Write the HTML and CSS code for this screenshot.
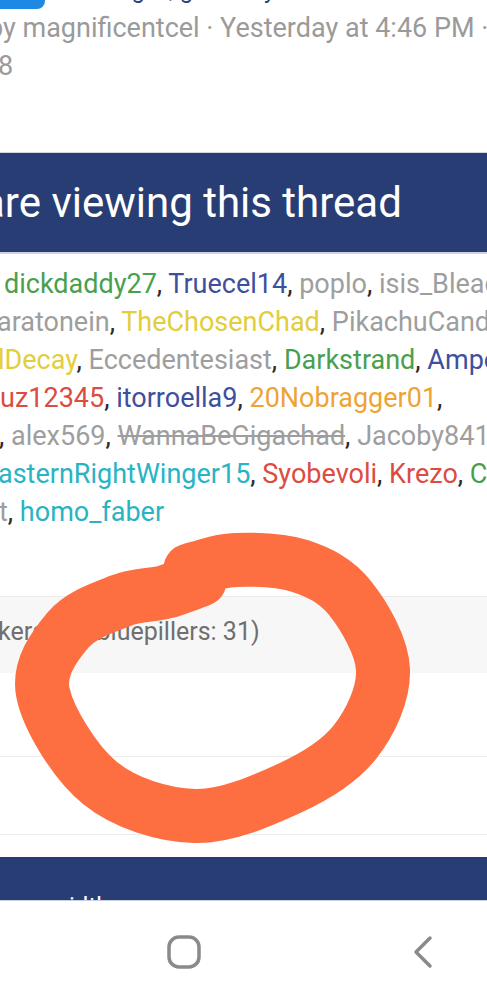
FILE: index.html
```html
<!DOCTYPE html>
<html lang="en">
<head>
    <meta charset="UTF-8">
    <meta name="viewport" content="width=device-width, initial-scale=1.0">
    <title>Who is viewing this thread</title>
    <link rel="stylesheet" href="styles.css">
</head>
<body>
    <div class="page">
        <!-- thread title, scrolled mostly out of view -->
        <div class="thread-top">
            <span class="prefix-tag"></span>
            <span class="thread-title">The thing is, girls only</span>
        </div>
        <div class="thread-meta">
            <div class="meta-line meta-first">by magnificentcel · Yesterday at 4:46 PM · Replies</div>
            <div class="meta-line meta-second">8</div>
        </div>

        <section class="block">
            <h2 class="block-header">are viewing this thread</h2>
            <div class="user-list">
                <div class="line line-1"><span class="green">dickdaddy27</span>, <span class="indigo">Truecel14</span>, <span class="gray">poplo</span>, <span class="gray">isis_Bleach</span>,</div>
                <div class="line line-2"><span class="gray">aratonein</span>, <span class="yellow">TheChosenChad</span>, <span class="gray">PikachuCandy</span>,</div>
                <div class="line line-3"><span class="yellow">lDecay</span>, <span class="gray">Eccedentesiast</span>, <span class="green">Darkstrand</span>, <span class="indigo">Ampere</span>,</div>
                <div class="line line-4"><span class="red">uz12345</span>, <span class="indigo">itorroella9</span>, <span class="orange">20Nobragger01</span>,</div>
                <div class="line line-5">, <span class="gray">alex569</span>, <span class="gray struck">WannaBeGigachad</span>, <span class="gray">Jacoby841</span>,</div>
                <div class="line line-6"><span class="teal">asternRightWinger15</span>, <span class="red">Syobevoli</span>, <span class="red">Krezo</span>, <span class="green">Copecel</span>,</div>
                <div class="line line-7"><span class="gray">t</span>, <span class="teal">homo_faber</span></div>
            </div>
            <div class="block-footer">kers: 14, bluepillers: 31)</div>
            <div class="block-row"></div>
            <div class="block-row short"></div>
        </section>

        <section class="block next-block">
            <h2 class="block-header small">width</h2>
        </section>
    </div>

    <!-- android navigation bar -->
    <nav class="system-nav">
        <svg class="nav-home" width="34" height="34" viewBox="0 0 34 34">
            <rect x="2" y="2" width="30" height="30" rx="10" fill="none" stroke="#8a8a8a" stroke-width="3.5"/>
        </svg>
        <svg class="nav-back" width="22" height="34" viewBox="0 0 22 34">
            <polyline points="18,3 4,17 18,31" fill="none" stroke="#8a8a8a" stroke-width="3.5" stroke-linecap="round" stroke-linejoin="round"/>
        </svg>
    </nav>

    <!-- hand drawn circle over the page -->
    <svg class="scribble" width="487" height="1000" viewBox="0 0 487 1000">
        <path d="M190 570 C205 566.7 216.7 560.7 235 560 C253.3 559.3 280.8 559.7 300 566 C319.2 572.3 336.2 580.7 350 598 C363.8 615.3 382.2 646 383 670 C383.8 694 370.5 722.3 355 742 C339.5 761.7 316.7 775.7 290 788 C263.3 800.3 226.7 816.8 195 816 C163.3 815.2 125.3 803.5 100 783 C74.7 762.5 48.3 718.5 43 693 C37.7 667.5 55.2 645.3 68 630 C80.8 614.7 103.8 607.3 120 601 C136.2 594.7 151.7 595.5 165 592 C178.3 588.5 188.3 584 200 580" fill="none" stroke="#fd6e40" stroke-width="54" stroke-linecap="round" stroke-linejoin="round"/>
    </svg>
</body>
</html>
```

FILE: styles.css
```css
* {
    box-sizing: border-box;
}
body {
    margin: 0;
    font-family: Roboto, "Noto Sans", Arial, sans-serif;
    background-color: #fff;
    color: #2b2b2b;
    position: relative;
    height: 1000px;
    overflow: hidden;
}
.page {
    overflow: hidden;
}
.thread-top {
    display: flex;
    align-items: flex-start;
    height: 9px;
    overflow: hidden;
}
.prefix-tag {
    flex: 0 0 45px;
    height: 9px;
    background: #1e88e5;
    border-radius: 0 0 8px 0;
}
.thread-title {
    margin-top: -22px;
    font-size: 24px;
    line-height: 24px;
    color: #2b3f7a;
    white-space: nowrap;
}
.thread-meta {
    font-size: 27px;
    line-height: 38px;
    color: #9a9a9a;
    white-space: nowrap;
}
.meta-first {
    margin-left: -12px;
}
.meta-second {
    margin-left: -2px;
}
.block {
    margin-top: 67px;
}
.block-header {
    margin: 0;
    height: 102px;
    line-height: 100px;
    background: #293d75;
    color: #fff;
    font-size: 42px;
    font-weight: 400;
    text-indent: -18px;
    white-space: nowrap;
    overflow: hidden;
    border-top: 1px solid #d3d6de;
    border-bottom: 2px solid #cdd3e4;
}
.user-list {
    padding: 11px 0 65px;
    font-size: 27px;
    line-height: 38px;
    white-space: nowrap;
}
.line-1 { margin-left: 4px; }
.line-2 { margin-left: -3px; }
.line-3 { margin-left: -2px; }
.line-4 { margin-left: 0; }
.line-5 { margin-left: -1px; }
.line-6 { margin-left: -2px; }
.line-7 { margin-left: -1px; }
.green { color: #4a9f4e; }
.indigo { color: #3e4f9e; }
.gray { color: #9e9e9e; }
.yellow { color: #e2cd3a; }
.red { color: #db4c41; }
.orange { color: #eea435; }
.teal { color: #2ab3c3; }
.struck {
    text-decoration: line-through;
}
.block-footer {
    height: 77px;
    line-height: 70px;
    border-top: 1px solid #ebebeb;
    background: #f7f7f7;
    color: #6f6f6f;
    font-size: 25px;
    text-indent: -2px;
    white-space: nowrap;
}
.block-row {
    height: 84px;
    border-bottom: 1px solid #ececec;
}
.block-row.short {
    height: 78px;
}
.next-block {
    margin-top: 22px;
}
.block-header.small {
    height: 143px;
    padding-top: 30px;
    font-size: 24px;
    line-height: 38px;
    text-indent: 51px;
    border-bottom: 0;
    border-top: 0;
}
.system-nav {
    position: absolute;
    top: 900px;
    left: 0;
    width: 100%;
    height: 100px;
    display: flex;
    align-items: center;
    gap: 211px;
    padding: 3px 0 0 167px;
    background: #fff;
    border-top: 1px solid #c9cfdf;
}
.scribble {
    position: absolute;
    top: 0;
    left: 0;
    pointer-events: none;
}
```
